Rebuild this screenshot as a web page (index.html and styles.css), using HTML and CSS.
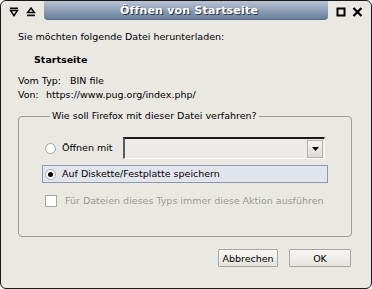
FILE: index.html
```html
<!DOCTYPE html>
<html lang="de">
<head>
<meta charset="utf-8">
<title>Öffnen von Startseite</title>
<link rel="stylesheet" href="styles.css">
</head>
<body>
<div class="window">
  <div class="titlebar">
    <div class="tb-left">
      <svg class="tb-icon" width="10" height="10" viewBox="0 0 10 10"><rect x="1" y="0.5" width="8" height="1.6" fill="#000"/><path d="M1.6 3.6 H8.4 L5 8.6 Z" fill="none" stroke="#000" stroke-width="1.5" stroke-linejoin="miter"/></svg>
      <svg class="tb-icon" width="10" height="10" viewBox="0 0 10 10"><path d="M1.6 5.6 H8.4 L5 1 Z" fill="none" stroke="#000" stroke-width="1.5"/><rect x="1" y="7.6" width="8" height="1.6" fill="#000"/></svg>
    </div>
    <div class="tb-tab"><span class="tb-title">Öffnen von Startseite</span></div>
    <div class="tb-right">
      <svg class="tb-icon" width="10" height="10" viewBox="0 0 10 10"><rect x="1.5" y="1.5" width="7" height="7" fill="none" stroke="#000" stroke-width="2"/></svg>
      <svg class="tb-icon" width="11" height="10" viewBox="0 0 11 10"><path d="M1.5 1 L9.5 9 M9.5 1 L1.5 9" stroke="#000" stroke-width="2.2"/></svg>
    </div>
  </div>
  <div class="content">
    <p class="intro">Sie möchten folgende Datei herunterladen:</p>
    <p class="filename">Startseite</p>
    <div class="info-row"><span class="info-label">Vom Typ:</span><span>BIN file</span></div>
    <div class="info-row info-from"><span class="info-label-short">Von:</span><span>https://www.pug.org/index.php/</span></div>
    <fieldset class="group">
      <legend class="group-legend">Wie soll Firefox mit dieser Datei verfahren?</legend>
      <div class="opt opt-open">
        <span class="radio"></span>
        <span class="opt-label">Öffnen mit</span>
        <div class="combo"><span class="combo-btn"><svg width="7" height="4" viewBox="0 0 7 4"><path d="M0 0 H7 L3.5 4 Z" fill="#000"/></svg></span></div>
      </div>
      <div class="opt opt-save">
        <span class="radio radio-on"></span>
        <span class="opt-label">Auf Diskette/Festplatte speichern</span>
      </div>
      <div class="opt opt-check">
        <span class="check"></span>
        <span class="opt-label disabled">Für Dateien dieses Typs immer diese Aktion ausführen</span>
      </div>
    </fieldset>
    <div class="buttons">
      <button class="btn btn-cancel">Abbrechen</button>
      <button class="btn btn-ok">OK</button>
    </div>
  </div>
</div>
</body>
</html>
```
FILE: styles.css
```css
html, body {
  margin: 0;
  padding: 0;
  background: #ffffff;
}
body {
  font-family: "DejaVu Sans", "Liberation Sans", sans-serif;
  font-size: 9.5px;
  color: #000;
}
.window {
  box-sizing: border-box;
  width: 372px;
  height: 289px;
  background: #eae8e3;
  border: 1px solid #1a1a1a;
  border-radius: 6px;
  overflow: hidden;
}
.titlebar {
  display: flex;
  height: 19px;
}
.tb-left {
  width: 43px;
  display: flex;
  align-items: center;
  gap: 7px;
  padding: 3px 0 0 8px;
  box-sizing: border-box;
}
.tb-right {
  width: 43px;
  display: flex;
  align-items: center;
  gap: 6px;
  padding: 3px 0 0 8px;
  box-sizing: border-box;
}
.tb-tab {
  flex: 1;
  display: flex;
  align-items: center;
  justify-content: center;
  background: linear-gradient(#b9c4d3, #8b9cb5 55%, #6b7f9d);
  border-radius: 0 0 4px 4px;
  border-bottom: 1px solid #5d6f8a;
}
.tb-title {
  color: #fff;
  font-weight: bold;
  font-size: 11px;
  letter-spacing: 0.2px;
  text-shadow: 1px 1px 0 #2c3646;
  padding-left: 6px;
}
.content {
  padding: 0 19px 0 17px;
}
.intro {
  margin: 10px 0 0;
  line-height: 14px;
}
.filename {
  margin: 9px 0 0 16px;
  line-height: 14px;
  font-weight: bold;
}
.info-row {
  display: flex;
  margin-top: 7px;
  line-height: 14px;
}
.info-from {
  margin-top: 0;
}
.info-label {
  width: 52px;
}
.info-label-short {
  width: 28px;
}
.group {
  margin: 7px 0 0;
  padding: 14px 0 27px 23px;
  border: 1px solid #9c9b96;
  border-radius: 4px;
  min-width: 0;
}
.group-legend {
  margin-left: 8px;
  padding: 0 2px;
  line-height: 14px;
}
.opt {
  display: flex;
  align-items: center;
  box-sizing: border-box;
  width: 286px;
  border: 1px solid transparent;
  padding: 0 2px;
}
.opt-open {
  height: 22px;
}
.opt-save {
  margin-top: 6px;
  height: 18px;
  background: #e3e5ec;
  border-color: #8d98ab;
}
.opt-check {
  margin-top: 9px;
  height: 17px;
}
.radio {
  box-sizing: border-box;
  width: 11px;
  height: 11px;
  border-radius: 50%;
  border: 1px solid #a9a8a3;
  background: #fff;
  display: flex;
  align-items: center;
  justify-content: center;
  flex: none;
}
.radio-on::after {
  content: "";
  width: 5px;
  height: 5px;
  border-radius: 50%;
  background: #000;
}
.check {
  box-sizing: border-box;
  width: 12px;
  height: 12px;
  border: 1px solid #a9a8a3;
  background: #fff;
  flex: none;
}
.opt-label {
  margin-left: 6px;
  line-height: 14px;
  white-space: nowrap;
}
.opt-check .opt-label {
  margin-left: 8px;
}
.disabled {
  color: #9b9a96;
}
.combo {
  margin-left: auto;
  box-sizing: border-box;
  width: 202px;
  height: 22px;
  border-top: 2px solid #1a1a1a;
  border-left: 2px solid #5a5a5a;
  border-right: 1px solid #fff;
  border-bottom: 1px solid #fff;
  background: #ecebe7;
  display: flex;
  justify-content: flex-end;
  align-items: center;
  padding-right: 1px;
}
.combo-btn {
  box-sizing: border-box;
  width: 16px;
  height: 18px;
  border: 1px solid #b3b2ad;
  background: linear-gradient(#f6f5f2, #dcdbd6);
  display: flex;
  align-items: center;
  justify-content: center;
}
.buttons {
  display: flex;
  justify-content: flex-end;
  gap: 11px;
  margin-top: 12px;
  padding-right: 1px;
}
.btn {
  box-sizing: border-box;
  height: 18px;
  padding: 0;
  font-family: inherit;
  font-size: 9.5px;
  color: #000;
  border: 1px solid #a8a7a2;
  border-radius: 1px;
  background: linear-gradient(#f7f6f3, #e6e5e0);
}
.btn-cancel {
  width: 60px;
}
.btn-ok {
  width: 62px;
}
```
